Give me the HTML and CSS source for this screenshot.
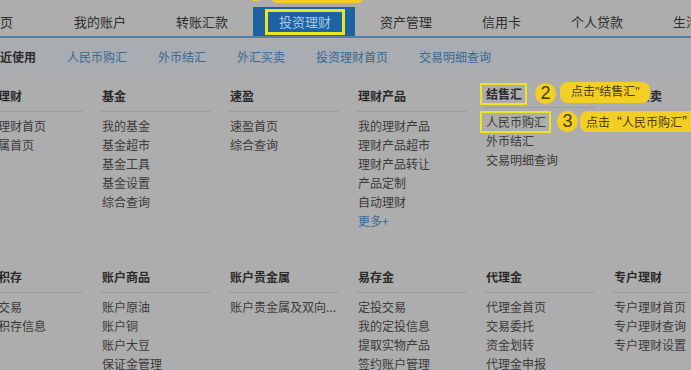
FILE: index.html
```html
<html>
<head>
  <meta charset="utf-8">
  <link rel="stylesheet" href="styles.css">
</head>
<body>

<div id="page">

  <div class="tabs">
    <div class="tab first">首页</div>
    <div class="tab">我的账户</div>
    <div class="tab">转账汇款</div>
    <div class="tab active">
      投资理财
      <span class="dot dot-top">1</span>
      <span class="tip tip-top">点击“投资理财”</span>
    </div>
    <div class="tab">资产管理</div>
    <div class="tab">信用卡</div>
    <div class="tab">个人贷款</div>
    <div class="tab">生活</div>
  </div>

  <div class="recent">
    <strong>最近使用</strong>
    <a>人民币购汇</a>
    <a>外币结汇</a>
    <a>外汇买卖</a>
    <a>投资理财首页</a>
    <a>交易明细查询</a>
  </div>

  <div class="menu">
    <div class="col">
      <div class="head">工银理财</div>
      <ul><li>工银理财首页</li><li>贵金属首页</li></ul>
    </div>
    <div class="col">
      <div class="head">基金</div>
      <ul><li>我的基金</li><li>基金超市</li><li>基金工具</li><li>基金设置</li><li>综合查询</li></ul>
    </div>
    <div class="col">
      <div class="head">速盈</div>
      <ul><li>速盈首页</li><li>综合查询</li></ul>
    </div>
    <div class="col">
      <div class="head">理财产品</div>
      <ul><li>我的理财产品</li><li>理财产品超市</li><li>理财产品转让</li><li>产品定制</li><li>自动理财</li><li class="more">更多+</li></ul>
    </div>
    <div class="col">
      <div class="head">
        <span class="mark">结售汇
          <span class="dot dot-2">2</span>
          <span class="tip tip-2">点击"结售汇"</span>
        </span>
      </div>
      <ul>
        <li><span class="mark">人民币购汇
          <span class="dot dot-3">3</span>
          <span class="tip tip-3">点击“人民币购汇”</span>
        </span></li>
        <li>外币结汇</li><li>交易明细查询</li>
      </ul>
    </div>
    <div class="col">
      <div class="head">外汇买卖</div>
      <ul></ul>
    </div>

    <div class="col">
      <div class="head">黄金积存</div>
      <ul><li>积存交易</li><li>我的积存信息</li></ul>
    </div>
    <div class="col">
      <div class="head">账户商品</div>
      <ul><li>账户原油</li><li>账户铜</li><li>账户大豆</li><li>保证金管理</li></ul>
    </div>
    <div class="col">
      <div class="head">账户贵金属</div>
      <ul><li>账户贵金属及双向...</li></ul>
    </div>
    <div class="col">
      <div class="head">易存金</div>
      <ul><li>定投交易</li><li>我的定投信息</li><li>提取实物产品</li><li>签约账户管理</li></ul>
    </div>
    <div class="col">
      <div class="head">代理金</div>
      <ul><li>代理金首页</li><li>交易委托</li><li>资金划转</li><li>代理金申报</li></ul>
    </div>
    <div class="col">
      <div class="head">专户理财</div>
      <ul><li>专户理财首页</li><li>专户理财查询</li><li>专户理财设置</li></ul>
    </div>
  </div>

</div>

</body>
</html>
```

FILE: styles.css
```css
body {
  margin: 0;
  width: 691px;
  height: 370px;
  overflow: hidden;
  background-color: #adadad;
  color: #3a3a3a;
  font-size: 12px;
  font-family: "Noto Sans CJK SC", "Liberation Sans", sans-serif;
}
#page {
  width: 691px;
}
.tabs {
  display: flex;
  height: 36px;
  border-bottom: 2px solid #5b7fa1;
  margin-left: -38px;
  white-space: nowrap;
}
.tab {
  position: relative;
  flex: none;
  margin-top: 7px;
  height: 29px;
  line-height: 29px;
  padding: 0 25px;
  font-size: 13px;
  color: #2e2e2e;
}
.tab.first {
  margin-right: 11px;
}
.tab.active {
  background-color: #1d62a2;
  color: #a9c9e6;
  padding: 0 24px 0 26px;
}
.tab.active::after {
  content: '';
  position: absolute;
  left: 12px;
  right: 10px;
  top: 2px;
  bottom: 1px;
  border: 3px solid #ece51d;
}
.recent {
  display: flex;
  gap: 31px;
  height: 37px;
  line-height: 37px;
  margin-left: -12px;
  background-color: #a9acb1;
  white-space: nowrap;
}
.recent strong {
  color: #2b2b2b;
}
.recent a {
  color: #386893;
}
.menu {
  display: grid;
  grid-template-columns: repeat(6, 111px);
  column-gap: 17px;
  row-gap: 38px;
  margin-left: -28px;
  padding-top: 12px;
}
.col {
  white-space: nowrap;
}
.head {
  line-height: 18px;
  padding: 0 2px 6px 2px;
  border-bottom: 1px solid #9e9e9e;
  font-weight: bold;
  color: #2a2a2a;
}
.col ul {
  list-style: none;
  margin: 0;
  padding: 4px 2px 0 2px;
}
.col li {
  line-height: 19px;
}
.col li.more {
  color: #386893;
}
.mark {
  position: relative;
  display: inline-block;
  line-height: 14px;
}
.mark::after {
  content: '';
  position: absolute;
  left: -6px;
  right: -5px;
  top: -4px;
  bottom: -4px;
  border: 2px solid #ece51d;
}
.dot {
  position: absolute;
  width: 21px;
  height: 21px;
  line-height: 21px;
  border-radius: 50%;
  background-color: #f3cf26;
  color: #4a3d06;
  text-align: center;
  font-family: "Liberation Sans", sans-serif;
  font-size: 18px;
  font-weight: normal;
  z-index: 2;
}
.tip {
  position: absolute;
  height: 21px;
  line-height: 21px;
  border-radius: 8px;
  background-color: #f3cf26;
  color: #4a3d06;
  font-size: 12px;
  font-weight: normal;
  white-space: nowrap;
  z-index: 2;
}
.dot-top {
  left: -8px;
  top: -27px;
}
.tip-top {
  left: 17px;
  top: -25px;
  width: 95px;
  text-align: center;
}
.dot-2 {
  left: calc(100% + 13px);
  top: -4px;
}
.tip-2 {
  left: calc(100% + 38px);
  top: -5px;
  padding: 0 10px 0 11px;
  font-family: "Liberation Sans", "Noto Sans CJK SC", sans-serif;
}
.dot-3 {
  left: calc(100% + 11px);
  top: -4px;
}
.tip-3 {
  left: calc(100% + 34px);
  top: -4px;
  padding: 0 5px 0 6px;
}
```
